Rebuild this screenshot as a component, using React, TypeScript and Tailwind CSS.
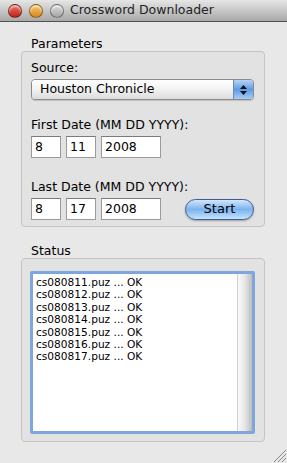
import React from 'react';

const font = { fontFamily: '"DejaVu Sans", "Liberation Sans", sans-serif' };

const lines = [
  'cs080811.puz ... OK',
  'cs080812.puz ... OK',
  'cs080813.puz ... OK',
  'cs080814.puz ... OK',
  'cs080815.puz ... OK',
  'cs080816.puz ... OK',
  'cs080817.puz ... OK',
];

const Light: React.FC<{ color: string }> = ({ color }) => (
  <div className={`w-[14px] h-[14px] rounded-full border border-black/40 ${color} shadow-[inset_0_2px_2px_rgba(255,255,255,0.6)]`} />
);

const DateField: React.FC<{ value: string; w: string }> = ({ value, w }) => (
  <div className={`${w} h-[22px] bg-white border border-[#9b9b9b] border-t-[#7b7b7b] pl-[3px] flex items-center text-[12.5px] text-black`}>
    {value}
  </div>
);

const App: React.FC = () => {
  return (
    <div className="w-[287px] h-[463px] bg-[#e8e8e8] flex flex-col text-black" style={font}>
      {/* title bar */}
      <div className="h-[22px] flex items-center bg-gradient-to-b from-[#e6e6e6] to-[#a9a9a9] border-b border-[#515151] pl-[8px]">
        <div className="flex gap-[7px]">
          <Light color="bg-gradient-to-b from-[#e96a60] to-[#c21f16]" />
          <Light color="bg-gradient-to-b from-[#f6c665] to-[#d98616]" />
          <Light color="bg-gradient-to-b from-[#d8d8d8] to-[#a8a8a8]" />
        </div>
        <span className="ml-[6px] text-[12.5px] text-[#222]">Crossword Downloader</span>
      </div>

      <div className="flex-1 flex flex-col px-[21px] pr-[22px]">
        {/* Parameters */}
        <div className="mt-[14px] ml-[10px] text-[12.5px] leading-[15px]">Parameters</div>
        <div className="h-[176px] rounded-[4px] border border-[#c4c4c4] bg-[#e2e2e2] px-[9px] pr-[10px] flex flex-col">
          <div className="mt-[8px] text-[12.5px] leading-[15px]">Source:</div>
          <div className="mt-[4px] h-[21px] rounded-[4px] border border-[#8b8b8b] flex overflow-hidden shadow-[0_1px_1px_rgba(0,0,0,0.15)]">
            <div className="flex-1 bg-gradient-to-b from-[#ffffff] via-[#f2f2f2] to-[#dcdcdc] text-[12.5px] flex items-center pl-[8px]">
              Houston Chronicle
            </div>
            <div className="w-[20px] bg-gradient-to-b from-[#b8d3f4] via-[#5e9ae6] to-[#a5cdf6] border-l border-[#6b8bb8] flex flex-col items-center justify-center gap-[2px]">
              <svg width="7" height="4" viewBox="0 0 7 4"><path d="M3.5 0 L7 4 L0 4 Z" fill="#111" /></svg>
              <svg width="7" height="4" viewBox="0 0 7 4"><path d="M0 0 L7 0 L3.5 4 Z" fill="#111" /></svg>
            </div>
          </div>

          <div className="mt-[17px] text-[12.5px] leading-[15px]">First Date (MM DD YYYY):</div>
          <div className="mt-[4px] flex gap-[5px]">
            <DateField value="8" w="w-[30px]" />
            <DateField value="11" w="w-[30px]" />
            <DateField value="2008" w="w-[60px]" />
          </div>

          <div className="mt-[21px] text-[12.5px] leading-[15px]">Last Date (MM DD YYYY):</div>
          <div className="mt-[4px] flex gap-[5px] items-center">
            <DateField value="8" w="w-[30px]" />
            <DateField value="17" w="w-[30px]" />
            <DateField value="2008" w="w-[60px]" />
            <div className="ml-auto w-[69px] h-[21px] rounded-full border border-[#3d5d94] bg-gradient-to-b from-[#d4e6fb] via-[#7bb2ee] to-[#c6e4fd] flex items-center justify-center text-[13px] shadow-[0_1px_2px_rgba(0,0,0,0.3)]">
              Start
            </div>
          </div>
        </div>

        {/* Status */}
        <div className="mt-[16px] ml-[10px] text-[12.5px] leading-[15px]">Status</div>
        <div className="h-[184px] rounded-[4px] border border-[#c4c4c4] bg-[#e2e2e2] px-[8px] pr-[9px] pt-[12px]">
          <div className="h-[163px] border-[3px] border-[#7fa6dc] rounded-[2px] bg-white flex">
            <div className="flex-1 pl-[3px] pt-[2px] text-[10.6px] leading-[12.4px]">
              {lines.map(l => (
                <div key={l}>{l}</div>
              ))}
            </div>
            <div className="w-[15px] bg-gradient-to-r from-[#fafafa] via-[#e6e6e6] to-[#bdbdbd] border-l border-[#d0d0d0]" />
          </div>
        </div>
      </div>

      {/* resize grip */}
      <div className="h-[15px] flex justify-end">
        <svg width="15" height="15" viewBox="0 0 15 15">
          <line x1="2" y1="14" x2="14" y2="2" stroke="#8a8a8a" strokeWidth="1" />
          <line x1="6" y1="14" x2="14" y2="6" stroke="#8a8a8a" strokeWidth="1" />
          <line x1="10" y1="14" x2="14" y2="10" stroke="#8a8a8a" strokeWidth="1" />
        </svg>
      </div>
    </div>
  );
};

export default App;
